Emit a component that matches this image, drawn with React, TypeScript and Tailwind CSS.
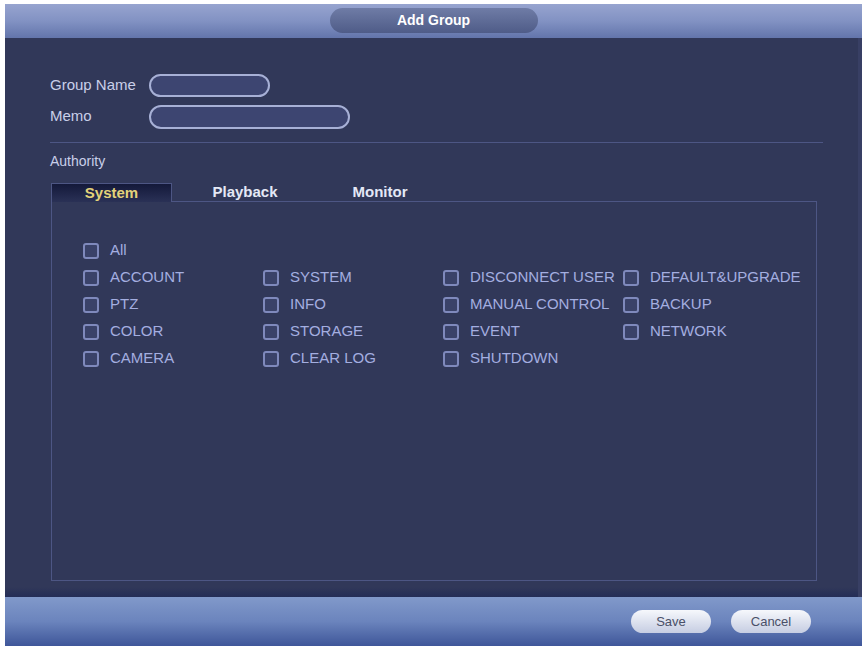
import React from 'react';

const rows: string[][] = [
  ['ACCOUNT', 'SYSTEM', 'DISCONNECT USER', 'DEFAULT&UPGRADE'],
  ['PTZ', 'INFO', 'MANUAL CONTROL', 'BACKUP'],
  ['COLOR', 'STORAGE', 'EVENT', 'NETWORK'],
  ['CAMERA', 'CLEAR LOG', 'SHUTDOWN', ''],
];

const Check: React.FC<{ label: string }> = ({ label }) => (
  <div className="flex items-center h-[27px]">
    <span className="w-[16px] h-[16px] rounded-[3px] border-2 border-[#7f89bc] bg-[#3a4269]"></span>
    <span className="ml-[11px] text-[15px] text-[#a4aee0] whitespace-nowrap">{label}</span>
  </div>
);

const App: React.FC = () => {
  return (
    <div
      className="w-[862px] h-[646px] bg-white pt-[4px] pl-[5px] flex"
      style={{ fontFamily: '"Liberation Sans", Arial, sans-serif' }}
    >
      <div className="flex-1 flex flex-col">
        {/* title bar */}
        <div className="h-[34px] bg-linear-to-b from-[#97a4cf] via-[#8292c3] to-[#6375ab] flex justify-center pt-[4px]">
          <div className="w-[208px] h-[25px] rounded-full bg-linear-to-b from-[#6f7ca6] to-[#4f5c88] flex items-center justify-center text-white text-[14px] font-bold">
            Add Group
          </div>
        </div>

        {/* body */}
        <div className="flex-1 bg-[#313859] flex flex-col pl-[45px] pt-[36px] border-r-[4px] border-[#383f64]">
          <div className="flex items-center h-[23px]">
            <span className="w-[99px] text-[15px] text-[#c9cfe9]">Group Name</span>
            <div className="w-[121px] h-[23px] rounded-full border-2 border-[#a7b0d6] bg-[#3d4571]"></div>
          </div>
          <div className="flex items-center h-[23px] mt-[8px]">
            <span className="w-[99px] text-[15px] text-[#c9cfe9]">Memo</span>
            <div className="w-[201px] h-[24px] rounded-full border-2 border-[#a7b0d6] bg-[#3d4571]"></div>
          </div>

          <div className="mt-[14px] h-px w-[773px] bg-[#4d5684]"></div>
          <div className="mt-[9px] text-[14px] leading-[18px] text-[#c9cfe9]">Authority</div>

          {/* tabs */}
          <div className="mt-[13px] ml-px w-[766px] h-[19px] flex">
            <div className="w-[121px] h-full border-l border-t border-r border-[#4d5684] bg-linear-to-b from-[#14193a] to-[#2a3156] flex items-center justify-center text-[15px] font-bold text-[#e3d27a]">
              System
            </div>
            <div className="flex-1 h-full border-b border-[#4d5684] flex items-center text-[15px] font-bold text-[#e4e8f6]">
              <span className="w-[146px] text-center">Playback</span>
              <span className="w-[124px] text-center">Monitor</span>
            </div>
          </div>

          {/* permission box */}
          <div className="ml-px w-[766px] h-[379px] border-l border-r border-b border-[#4d5684] pt-[35px] pl-[31px]">
            <Check label="All" />
            {rows.map((r, i) => (
              <div key={i} className="grid grid-cols-[180px_180px_180px_180px]">
                {r.map((l, j) => (l ? <Check key={j} label={l} /> : <div key={j}></div>))}
              </div>
            ))}
          </div>

          <div className="mt-auto -ml-[45px] h-[10px] bg-linear-to-b from-[#313859] to-[#242d57]"></div>
        </div>

        {/* footer */}
        <div className="h-[49px] bg-linear-to-b from-[#8199ca] via-[#6b84bd] to-[#3f5699] flex items-center justify-end pr-[51px] gap-[20px]">
          <button className="w-[80px] h-[23px] rounded-full bg-linear-to-b from-[#f6f8fc] to-[#c6cde2] text-[13px] text-[#4a5068]">
            Save
          </button>
          <button className="w-[80px] h-[23px] rounded-full bg-linear-to-b from-[#f6f8fc] to-[#c6cde2] text-[13px] text-[#4a5068]">
            Cancel
          </button>
        </div>
      </div>
    </div>
  );
};

export default App;
